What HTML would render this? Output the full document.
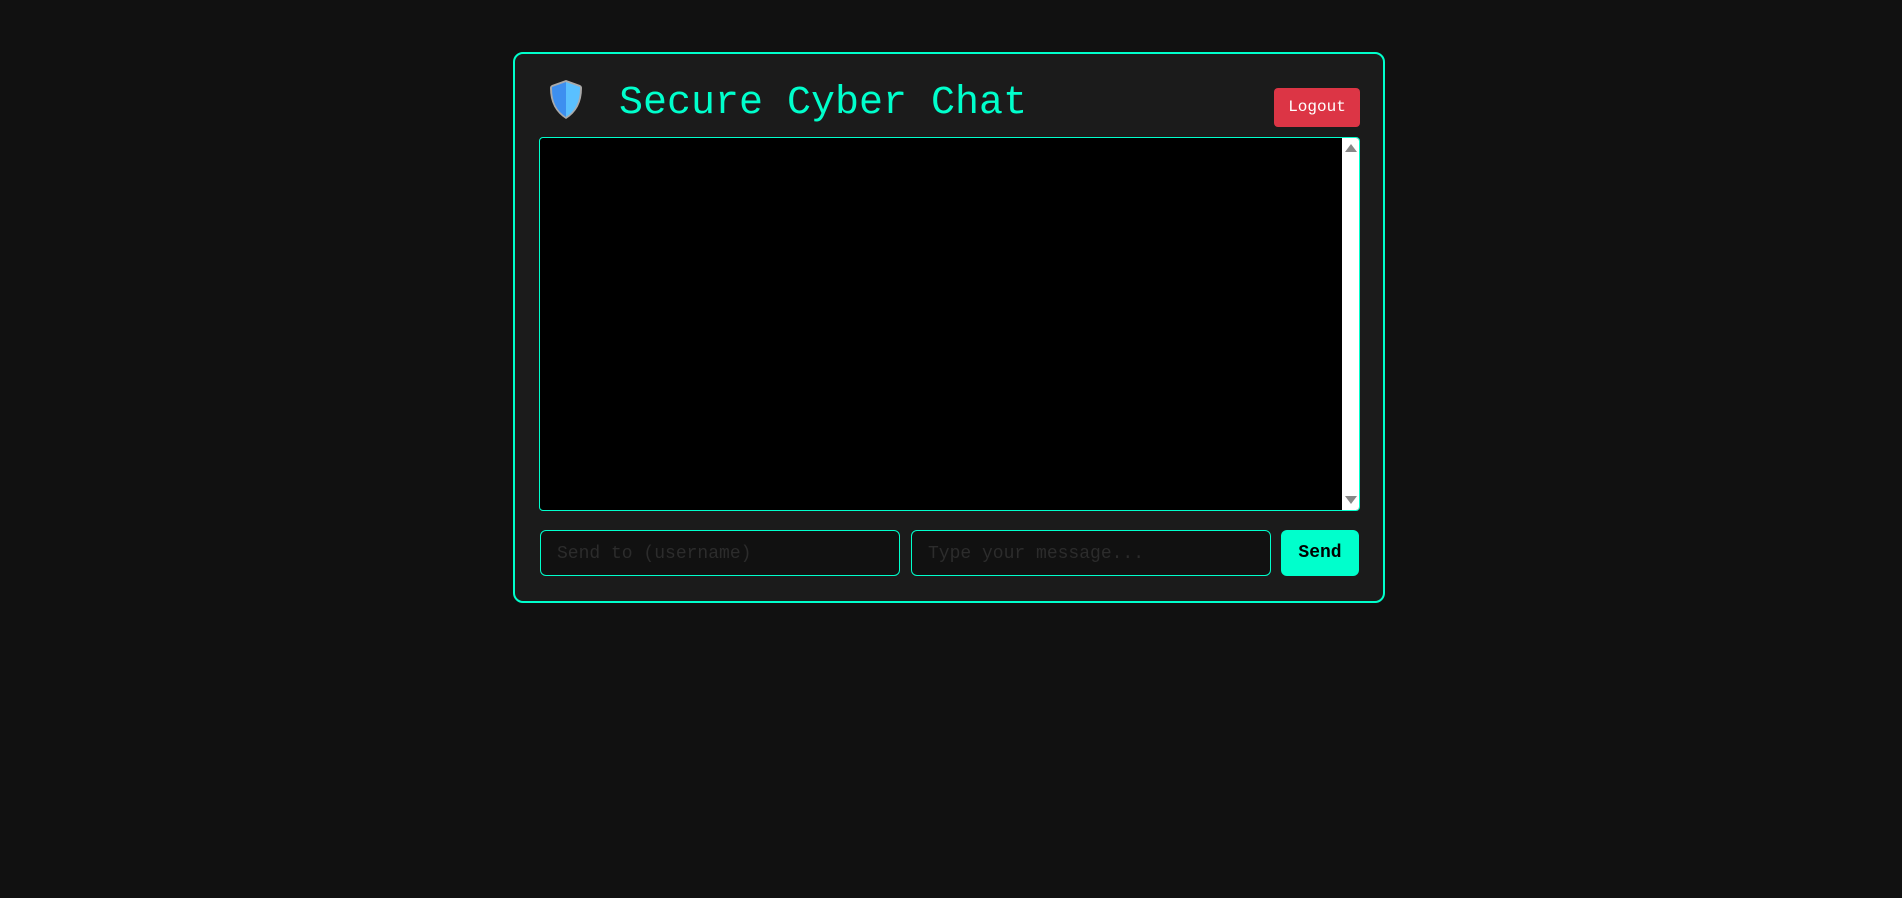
<!DOCTYPE html>
<html><head><meta charset="utf-8">
<style>
html,body{margin:0;padding:0;background:#111;width:1902px;height:898px;overflow:hidden;font-family:"Liberation Mono",monospace;}
.box{position:absolute;left:513px;top:52px;width:868px;height:547px;border:2px solid #00ffcc;border-radius:10px;background:#1b1b1b;}
.title{position:absolute;left:619px;top:78px;font-size:40px;line-height:52px;color:#00ffcc;white-space:nowrap;}
.shield{position:absolute;left:549px;top:79px;}
.logout{position:absolute;left:1274px;top:88px;width:86px;height:39px;background:#dc3545;border-radius:4px;color:#fff;font-size:16px;line-height:39px;text-align:center;}
.chat{position:absolute;left:539px;top:137px;width:819px;height:372px;border:1px solid #00ffcc;border-radius:4px;background:#000;overflow:hidden;}
.sb{position:absolute;right:0;top:0;width:17px;height:100%;background:#fff;}
.up{position:absolute;left:3px;top:6px;width:0;height:0;border-left:6px solid transparent;border-right:6px solid transparent;border-bottom:8px solid #888;}
.dn{position:absolute;left:3px;bottom:6px;width:0;height:0;border-left:6px solid transparent;border-right:6px solid transparent;border-top:8px solid #888;}
.inp{position:absolute;top:530px;border:1px solid #00ffcc;border-radius:6px;background:#111;color:#2c2c2c;font-size:18px;line-height:46px;padding-left:16px;box-sizing:border-box;height:46px;}
.send{position:absolute;left:1281px;top:530px;width:78px;height:46px;background:#00ffcc;border-radius:6px;color:#000;font-weight:bold;font-size:18px;line-height:46px;text-align:center;}
</style></head><body>
<div class="box"></div>
<svg class="shield" width="34" height="41" viewBox="0 0 34 41">
<path d="M17 1 L31 6 Q33 7 33 9 Q33 30 17 40 Q1 30 1 9 Q1 7 3 6 Z" fill="#aaa"/>
<path d="M17 3 L17 38 Q3 29 3 10 L3 8 Z" fill="#3d8ff0"/>
<path d="M17 3 L31 8 L31 10 Q31 29 17 38 Z" fill="#5ac0ff"/>
</svg>
<div class="title">Secure Cyber Chat</div>
<div class="logout">Logout</div>
<div class="chat"><div class="sb"><div class="up"></div><div class="dn"></div></div></div>
<div class="inp" style="left:540px;width:360px;">Send to (username)</div>
<div class="inp" style="left:911px;width:360px;">Type your message...</div>
<div class="send">Send</div>
</body></html>
